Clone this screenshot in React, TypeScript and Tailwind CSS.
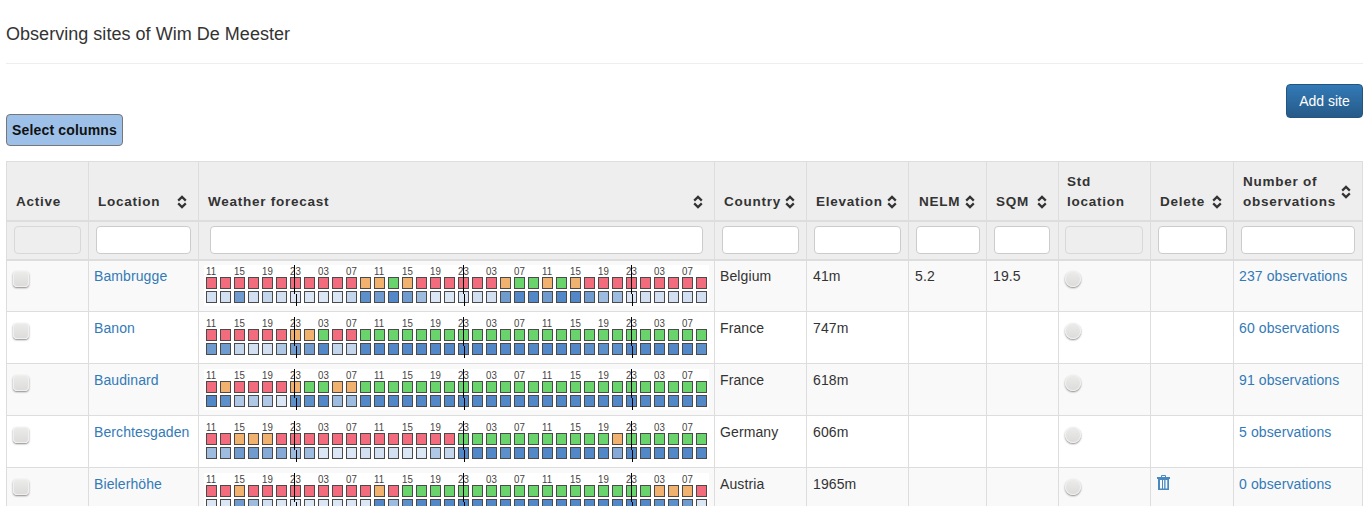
const sans = "font-['Liberation_Sans',Arial,sans-serif]";

const TOP: Record<string, string> = { r: "#f26c7e", o: "#f2b26f", g: "#68d46b" };
const CLOUD = ["#dce7f5", "#d3e0f1", "#c3d6ec", "#aec8e5", "#9dbce0", "#85aad7", "#6f9bcf", "#5c90ca", "#5288c8"];

type Row = { name: string; top: string; cloud: string; country: string; elev: string; nelm?: string; sqm?: string; del?: boolean; obs: string };

const rows: Row[] = [
  { name: "Bambrugge", top: "rrrrrrrrrrroogorrrrrroggogorrrrrrrrr", cloud: "116121000027686400011688688644011111", country: "Belgium", elev: "41m", nelm: "5.2", sqm: "19.5", obs: "237 observations" },
  { name: "Banon", top: "rrrrrroogrrggggggggggggggggggggggggg", cloud: "662113668228888888888888888777888887", country: "France", elev: "747m", obs: "60 observations" },
  { name: "Baudinard", top: "rorrrroggoogggggggggggggggggggggggggg".slice(0, 36), cloud: "873330778448888888888888888888888888", country: "France", elev: "618m", obs: "91 observations" },
  { name: "Berchtesgaden", top: "rrooorrrrrrrrrrrrrgggggggggggogggggg", cloud: "446655440001110032888788888885888888", country: "Germany", elev: "606m", obs: "5 observations" },
  { name: "Bielerhöhe", top: "rrorrrrrrrrrorggggggggggggggggggooor", cloud: "006410000000847888888888888888887760", country: "Austria", elev: "1965m", del: true, obs: "0 observations" },
];

const hours = ["11", "15", "19", "23", "03", "07", "11", "15", "19", "23", "03", "07", "11", "15", "19", "23", "03", "07"];

function Sort() {
  return (
    <svg width="10" height="14" viewBox="0 0 10 14" className="shrink-0 text-[#333]" fill="none" stroke="currentColor" strokeWidth="2.2">
      <path d="M1.2 5.6 5 1.900l3.800 3.700" />
      <path d="M1.2 8.400 5 12.100l3.800-3.700" />
    </svg>
  );
}

const lines = [
  [90, 92],
  [259, 260],
  [427, 428],
];

function Forecast({ r }: { r: Row }) {
  return (
    <div className="relative w-[505px] h-[41px] bg-white pl-[2px]">
      <div className={`${sans} flex h-[12px] text-[11px] leading-[12px] text-[#444]`}>
        {hours.map((h, i) => (
          <span key={i} className="w-[28px] shrink-0">
            <span className="inline-block origin-left scale-x-[0.88]">{h}</span>
          </span>
        ))}
      </div>
      <div className="flex gap-[3px]">
        {r.top.split("").map((c, i) => (
          <span key={i} className="w-[11px] h-[12px] shrink-0 border border-[#4a4a4a]" style={{ background: TOP[c] }} />
        ))}
      </div>
      <div className="flex gap-[3px] mt-[2px]">
        {r.cloud.split("").map((c, i) => (
          <span key={i} className="w-[11px] h-[12px] shrink-0 border border-[#4a4a4a]" style={{ background: CLOUD[+c] }} />
        ))}
      </div>
      {lines.map(([a, b]) => (
        <span key={a}>
          <span className="absolute top-0 h-[29px] w-px bg-black" style={{ left: a }} />
          <span className="absolute top-[29px] h-[12px] w-px bg-black" style={{ left: b }} />
        </span>
      ))}
    </div>
  );
}

function Th({ label, sort = true, w, pl = "pl-[9px]" }: { label: React.ReactNode; sort?: boolean; w: string; pl?: string }) {
  return (
    <th className={`${w} border border-[#ddd] bg-[#eee] border-b-2 ${pl} pr-[11px] pb-[8px] pt-[8px] align-bottom text-left`}>
      <div className="flex items-center justify-between font-bold text-[13.5px] leading-[20px] tracking-[0.75px] text-[#333]">
        <span>{label}</span>
        {sort && <Sort />}
      </div>
    </th>
  );
}

function Filter({ disabled, px = "px-[7px]" }: { disabled?: boolean; px?: string }) {
  return (
    <td className={`border border-[#ddd] bg-[#eee] ${px} pt-[4px] pb-[5px] border-b-2`}>
      <div className={`h-[28px] w-full rounded-[4px] border ${disabled ? "bg-[#eee] border-[#d8d8d8]" : "bg-white border-[#ccc]"}`} />
    </td>
  );
}

export default function App() {
  return (
    <div className={`${sans} h-[506px] overflow-hidden bg-white text-[14px] leading-[20px] text-[#333]`}>
      <div className="ml-[6px] mr-[9px] h-[64px] border-b border-[#eee] pt-[23px]">
        <h1 className="text-[18px] leading-[22px] font-normal tracking-[0.03px]">Observing sites of Wim De Meester</h1>
      </div>
      <div className="ml-[6px] mr-[9px] mt-[20px] h-[62px] flex justify-between">
        <button className="self-end h-[32px] w-[117px] rounded-[4px] border border-[#777] bg-[#9dc0e8] font-bold text-[14px] tracking-[0.15px] text-[#111]">Select columns</button>
        <button className="self-start h-[34px] w-[77px] rounded-[4px] border border-[#245580] bg-gradient-to-b from-[#337ab7] to-[#265a88] text-[14px] text-white">Add site</button>
      </div>
      <table className="ml-[6px] mt-[15px] w-[1356px] table-fixed border-collapse">
        <thead>
          <tr className="h-[59px]">
            <Th w="w-[82px]" label="Active" sort={false} />
            <Th w="w-[110px]" label="Location" />
            <Th w="w-[516px]" label="Weather forecast" />
            <Th w="w-[92px]" label="Country" />
            <Th w="w-[102px]" label="Elevation" />
            <Th w="w-[78px]" label="NELM" pl="pl-[10px]" />
            <Th w="w-[72px]" label="SQM" />
            <Th w="w-[92px]" label={<>Std<br />location</>} sort={false} pl="pl-[8px]" />
            <Th w="w-[83px]" label="Delete" />
            <Th w="w-[129px]" label={<>Number of<br />observations</>} />
          </tr>
          <tr className="h-[39px]">
            <Filter disabled />
            <Filter />
            <Filter px="px-[11px]" />
            <Filter />
            <Filter />
            <Filter px="pl-[7px] pr-[6px]" />
            <Filter px="pl-[7px] pr-[8px]" />
            <Filter disabled px="pl-[6px] pr-[7px]" />
            <Filter px="pl-[7px] pr-[6px]" />
            <Filter />
          </tr>
        </thead>
        <tbody>
          {rows.map((r, i) => {
            const bg = i % 2 === 0 ? "bg-[#f9f9f9]" : "bg-white";
            const pt = i === 0 ? "pt-[5px]" : "pt-[6px]";
            const td = `border border-[#ddd] align-top px-[5px] ${pt} tracking-[0.1px] h-[52px]`;
            return (
              <tr key={r.name} className={bg}>
                <td className={td}>
                  <span className="mt-[5px] ml-[1px] block h-[16px] w-[16px] rounded-[4px] border border-[#f0f0f0] bg-gradient-to-b from-[#ebebe9] to-[#dddcda] shadow-[0_1px_2px_#888]" />
                </td>
                <td className={`${td} text-[#337ab7]`}>{r.name}</td>
                <td className={`border border-[#ddd] align-top px-[5px] h-[52px] ${i === 0 ? "pt-[4px]" : "pt-[5px]"}`}><Forecast r={r} /></td>
                <td className={td}>{r.country}</td>
                <td className={`${td} !pl-[6px]`}>{r.elev}</td>
                <td className={`${td} !pl-[6px]`}>{r.nelm}</td>
                <td className={`${td} !pl-[6px]`}>{r.sqm}</td>
                <td className={td}>
                  <span className="mt-[5px] ml-[1px] block h-[16px] w-[16px] rounded-full border border-[#f0f0f0] bg-gradient-to-b from-[#ebebe9] to-[#dddcda] shadow-[0_1px_2px_#888]" />
                </td>
                <td className={td}>
                  {r.del && (
                    <svg width="13" height="15" viewBox="0 0 13 15" className="ml-[1px] mt-[1px] text-[#4a88c0]">
                      <path d="M4.500 2V.500h4V2" fill="none" stroke="currentColor" />
                      <rect x="0" y="2" width="13" height="2" fill="currentColor" />
                      <path fill="currentColor" fillRule="evenodd" d="M1 4h11v11H1zM3 5v8.500h2V5zM6 5v8.500h1.200V5zM8.500 5v8.500h1.800V5z" />
                    </svg>
                  )}
                </td>
                <td className={`${td} text-[#337ab7]`}>{r.obs}</td>
              </tr>
            );
          })}
        </tbody>
      </table>
    </div>
  );
}
